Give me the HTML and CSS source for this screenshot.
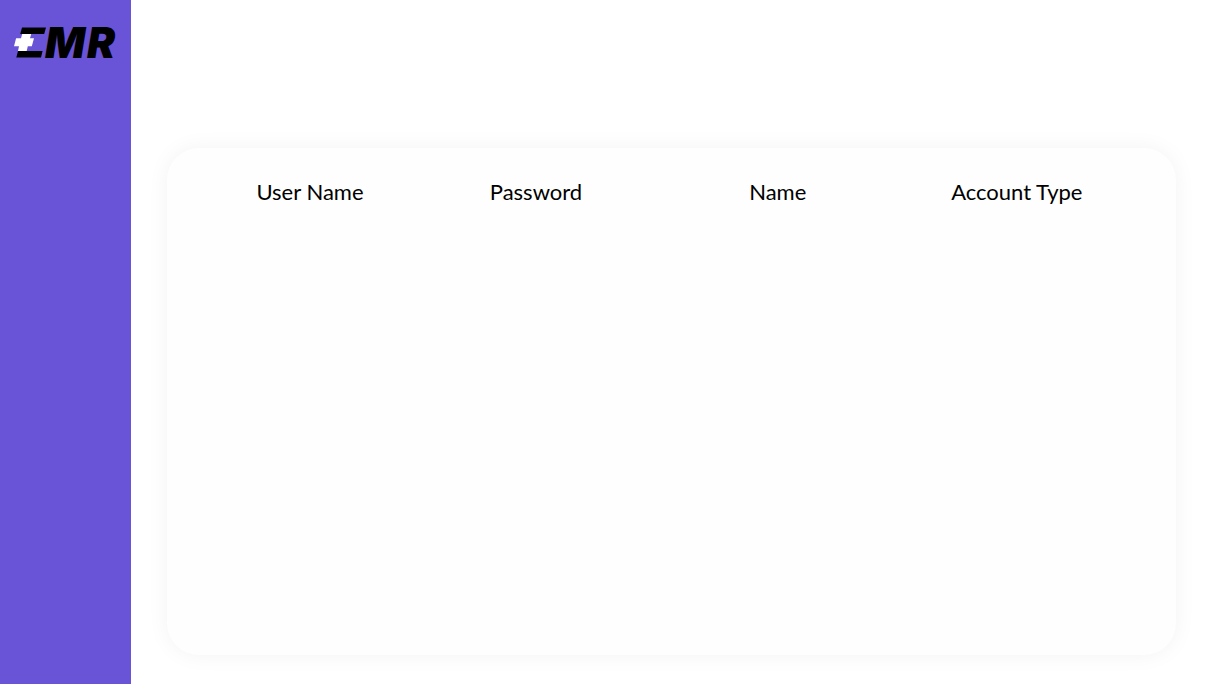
FILE: index.html
```html
<!DOCTYPE html>
<html lang="en">
<head>
<meta charset="utf-8">
<meta name="viewport" content="width=device-width, initial-scale=1">
<title>EMR</title>
<link rel="stylesheet" href="styles.css">
</head>
<body>
<div class="app">
  <aside class="sidebar">
    <svg class="logo" viewBox="0 0 104 34" role="img" aria-label="EMR">
      <path d="M8 1.5H32L30.2 8H6.2ZM4 25H28.6L27 31.6H2.3Z"/>
      <path class="logo-cross" d="M8.2 8H17.2L16 12.3H20L17.8 20.3H13.8L12.7 25H4L5 20.3H0L2.1 12.3H7Z"/>
      <text class="logo-text" x="31 73" y="32">MR</text>
    </svg>
  </aside>
  <main class="content">
    <section class="card">
      <table class="accounts">
        <colgroup>
          <col class="col-user"><col class="col-password"><col class="col-name"><col class="col-type">
        </colgroup>
        <thead>
          <tr>
            <th scope="col">User Name</th>
            <th scope="col">Password</th>
            <th scope="col">Name</th>
            <th scope="col">Account Type</th>
          </tr>
        </thead>
      </table>
    </section>
  </main>
</div>
</body>
</html>
```
FILE: styles.css
```css
* { box-sizing: border-box; }
body {
  margin: 0;
  background: #fff;
  color: #000;
  font-family: Lato, sans-serif;
}
.app { display: flex; min-height: 100vh; }
.sidebar {
  flex: 0 0 131px;
  padding: 26px 13px 26px 14px;
  background: #6954d8;
}
.logo { display: block; width: 104px; height: 34px; overflow: visible; }
.logo-cross { fill: #fff; }
.logo-text {
  font-family: Inter, sans-serif;
  font-size: 42px;
  font-weight: 900;
  font-style: italic;
}
.content {
  flex: 1;
  display: flex;
  padding: 148px 39px 29px 36px;
}
.card {
  flex: 1;
  padding: 30px 49px 30px 30px;
  border-radius: 32px;
  background: #fefefe;
  box-shadow: 0 0 22px rgba(0, 0, 0, 0.05);
}
.accounts {
  width: 100%;
  table-layout: fixed;
  border-collapse: collapse;
}
.accounts th {
  padding: 0;
  font-size: 22px;
  font-weight: 400;
  line-height: 28px;
  text-align: center;
}
.col-user, .col-password { width: 24.3%; }
.col-name { width: 27.7%; }
.col-type { width: 23.7%; }
```
